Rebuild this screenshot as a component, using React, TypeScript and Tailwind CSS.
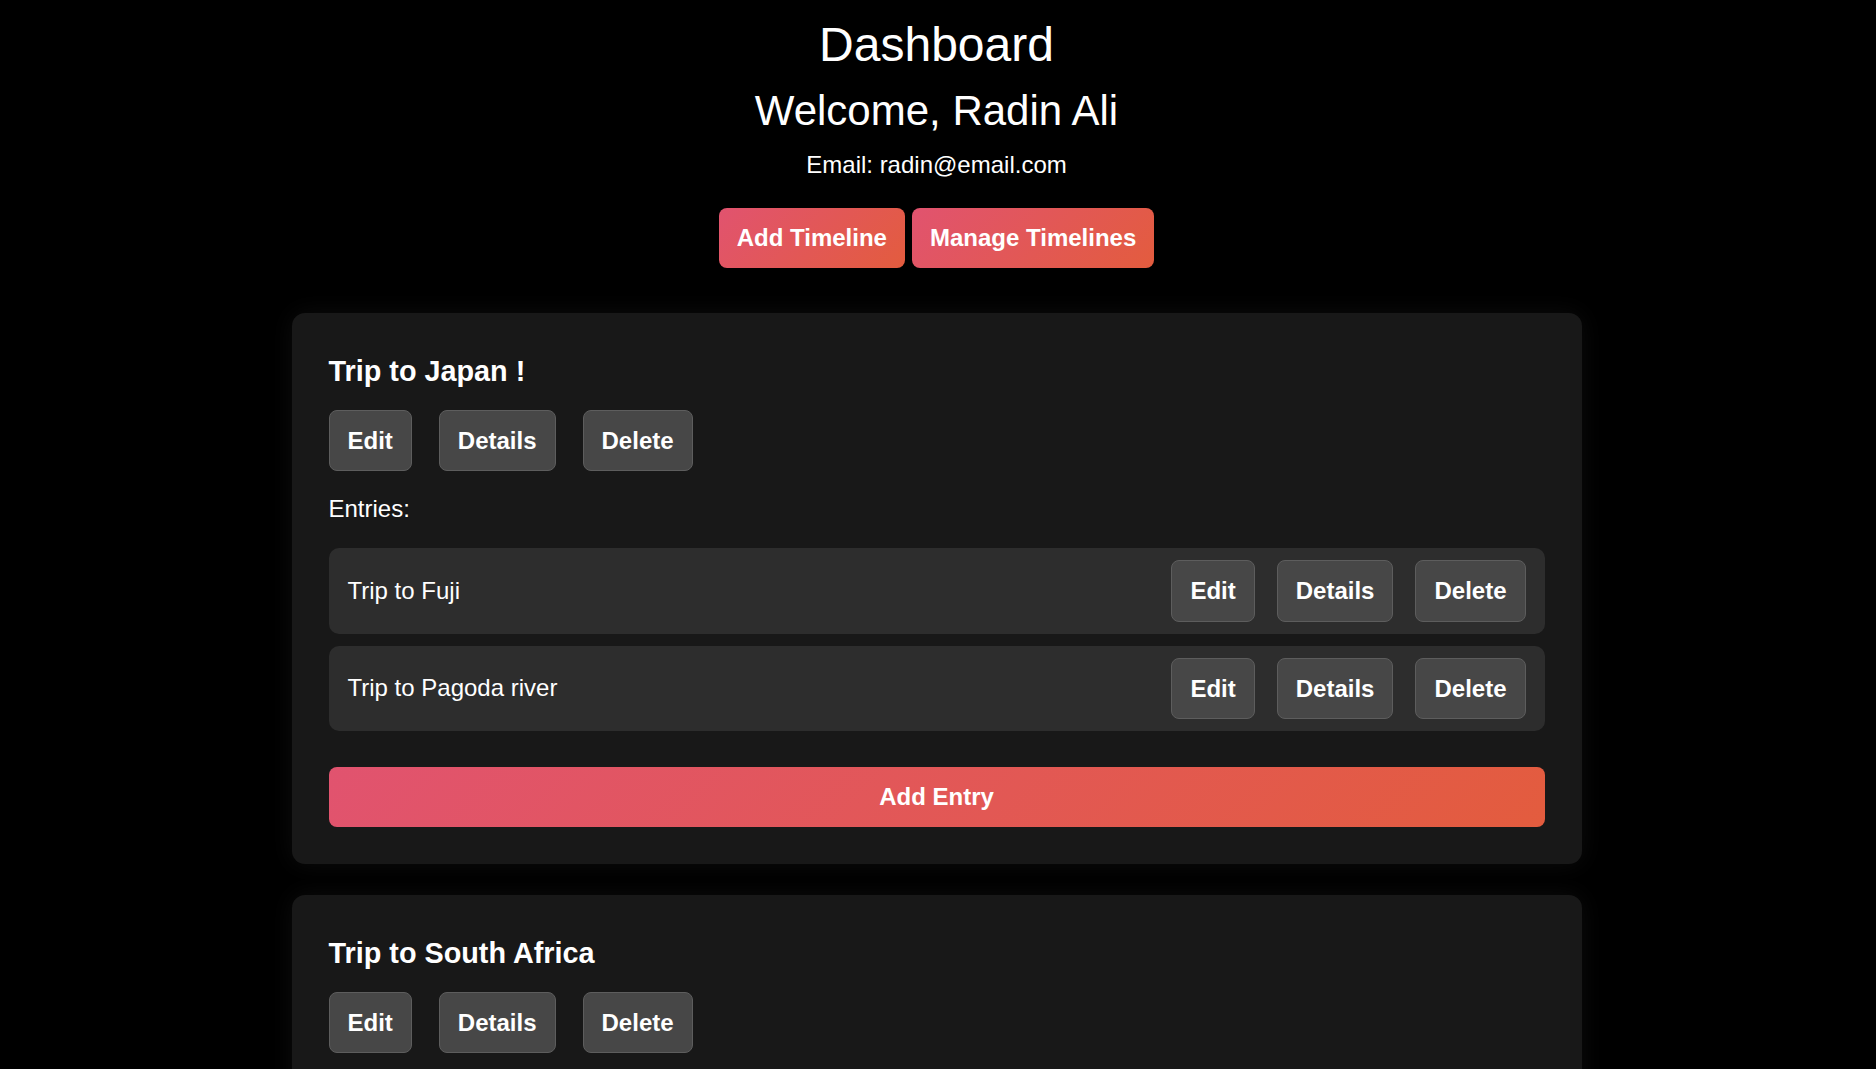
import React from 'react';

type Entry = { id: number; title: string };
type Timeline = { id: number; title: string; entries: Entry[] };

const timelines: Timeline[] = [
  {
    id: 1,
    title: 'Trip to Japan !',
    entries: [
      { id: 1, title: 'Trip to Fuji' },
      { id: 2, title: 'Trip to Pagoda river' },
    ],
  },
  {
    id: 2,
    title: 'Trip to South Africa',
    entries: [{ id: 3, title: 'Safari in Kruger' }],
  },
];

const gradientBtn =
  'bg-[linear-gradient(135deg,#e1536f,#e35c3e)] text-white font-bold text-[24px] leading-[1.15] rounded-[8px]';

function GreyButton({ children }: { children: React.ReactNode }) {
  return (
    <button className="bg-[#474747] border border-[#5d5d5d] rounded-[8px] px-[18px] py-[16px] text-white font-bold text-[24px] leading-[1.15]">
      {children}
    </button>
  );
}

function TimelineCard({ timeline }: { timeline: Timeline }) {
  return (
    <div className="w-[1290px] bg-[#181818] rounded-[13px] px-[37px] pt-[42px] pb-[37px] shadow-[0_0_24px_rgba(255,255,255,0.05)]">
      <h3 className="text-[28.8px] font-bold leading-[1.15] text-white">{timeline.title}</h3>
      <div className="flex gap-[27px] mt-[22px]">
        <GreyButton>Edit</GreyButton>
        <GreyButton>Details</GreyButton>
        <GreyButton>Delete</GreyButton>
      </div>
      <p className="mt-[24px] text-[24px] leading-[1.15] text-white">Entries:</p>
      <div className="flex flex-col gap-[12px] mt-[25px]">
        {timeline.entries.map((entry) => (
          <div
            key={entry.id}
            className="flex items-center justify-between bg-[#2d2d2d] rounded-[10px] pl-[19px] pr-[19px] py-[12px]"
          >
            <span className="text-[24px] text-white">{entry.title}</span>
            <div className="flex gap-[22px]">
              <GreyButton>Edit</GreyButton>
              <GreyButton>Details</GreyButton>
              <GreyButton>Delete</GreyButton>
            </div>
          </div>
        ))}
      </div>
      <button className={`${gradientBtn} w-full mt-[36px] py-[16px]`}>Add Entry</button>
    </div>
  );
}

export default function App() {
  return (
    <div className="min-h-screen bg-black text-white font-['Liberation_Sans',Arial,sans-serif] pb-[40px] pr-[3px]">
      {/* Header */}
      <div className="flex flex-col items-center pt-[17px]">
        <h1 className="text-[48px] leading-[1.15]">Dashboard</h1>
        <h2 className="text-[42px] leading-[1.15] mt-[15px]">Welcome, Radin Ali</h2>
        <p className="text-[24px] leading-[1.15] mt-[16px]">Email: radin@email.com</p>
        <div className="flex gap-[7px] mt-[29px]">
          <button className={`${gradientBtn} px-[18px] py-[16px]`}>Add Timeline</button>
          <button className={`${gradientBtn} px-[18px] py-[16px]`}>Manage Timelines</button>
        </div>
      </div>

      {/* Timelines */}
      <div className="flex flex-col items-center gap-[31px] mt-[45px]">
        {timelines.map((t) => (
          <TimelineCard key={t.id} timeline={t} />
        ))}
      </div>
    </div>
  );
}
